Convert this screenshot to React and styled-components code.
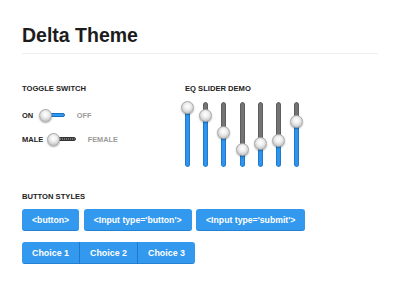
import React from 'react';
import styled, { createGlobalStyle } from 'styled-components';

const GlobalStyle = createGlobalStyle`
  body {
    margin: 0;
    background: #fff;
    font-family: "Liberation Sans", Arial, sans-serif;
  }
`;

const sliders = [5, 13, 30, 47, 41, 38, 19];

const Page = styled.div`
  padding: 22px 22px 0;
`;

const Title = styled.h1`
  margin: 0;
  padding: 1px 0 6px;
  font-size: 19.5px;
  line-height: 24px;
  font-weight: bold;
  color: #1c1c1c;
  border-bottom: 1px solid #eee;
`;

const Columns = styled.div`
  display: flex;
  margin-top: 30px;
`;

const Column = styled.div`
  display: flex;
  flex-direction: column;
  width: ${p => p.$width || 'auto'};
`;

const Label = styled.div`
  font-size: 7.6px;
  line-height: 10px;
  font-weight: bold;
  color: #222;
`;

const ToggleRow = styled.div`
  display: flex;
  align-items: center;
  height: 14px;
  margin-top: ${p => p.$top}px;
  font-size: 7.5px;
  font-weight: bold;
`;

const RowLabel = styled.span`
  color: #222;
`;

const OffLabel = styled.span`
  color: #9a9a9a;
  margin-left: 12px;
  font-size: 7.3px;
`;

const Toggle = styled.span`
  position: relative;
  display: inline-block;
  height: 13px;
  width: ${p => p.$width}px;
  margin-left: ${p => p.$gap}px;
`;

const ToggleTrack = styled.span`
  position: absolute;
  left: 6px;
  right: 0;
  top: 4.5px;
  height: 4px;
  box-sizing: border-box;
  border-radius: 2px;
  border: 1px solid ${p => (p.$on ? '#1b6fc2' : '#333')};
  background: ${p =>
    p.$on
      ? '#2f98ef'
      : 'repeating-linear-gradient(90deg, #777 0 1px, #3a3a3a 1px 2px)'};
`;

const Knob = styled.span`
  position: absolute;
  left: 0;
  width: 13px;
  height: 13px;
  box-sizing: border-box;
  border-radius: 50%;
  border: 1px solid #a9a9a9;
  background: radial-gradient(circle at 50% 40%, #ffffff 0%, #f0f0f0 35%, #cfcfcf 70%, #a8a8a8 100%);
  box-shadow: 0 1px 1.5px rgba(0, 0, 0, 0.35);
`;

const ToggleKnob = styled(Knob)`
  top: 0;
`;

const SliderRow = styled.div`
  display: flex;
  gap: 5.2px;
  margin-top: 8px;
  margin-left: -4px;
`;

const Slider = styled.div`
  position: relative;
  width: 13px;
  height: 65px;
  display: flex;
  justify-content: center;
`;

const Track = styled.div`
  width: 5px;
  height: 100%;
  display: flex;
  flex-direction: column;
  border-radius: 2.5px;
  overflow: hidden;
`;

const TrackEmpty = styled.div`
  flex: 1;
  background: #747474;
  border: 1px solid #5e5e5e;
  border-bottom: none;
  border-radius: 2.5px 2.5px 0 0;
`;

const TrackFill = styled.div`
  background: #2f95ec;
  border: 1px solid #1f79cc;
  border-top: none;
  border-radius: 0 0 2.5px 2.5px;
`;

const SliderKnob = styled(Knob)`
  top: 0;
`;

const Section = styled.div`
  margin-top: 25px;
`;

const ButtonRow = styled.div`
  display: flex;
  gap: 4.5px;
  margin-top: ${p => p.$top}px;
`;

const Button = styled.button`
  height: 22px;
  padding: 0 10px;
  border: none;
  border-radius: 3px;
  background: #3399ee;
  box-shadow: inset 0 -1px 0 rgba(0, 60, 130, 0.25);
  color: #fff;
  font-family: "Liberation Sans", Arial, sans-serif;
  font-size: 8.7px;
  font-weight: bold;
`;

const Group = styled.div`
  display: inline-flex;
  margin-top: 11px;
  border-radius: 3px;
  overflow: hidden;
  box-shadow: inset 0 -1px 0 rgba(0, 60, 130, 0.25);
`;

const Choice = styled(Button)`
  border-radius: 0;
  width: ${p => p.$width}px;
  padding: 0;
  font-size: 8.9px;
  border-left: ${p => (p.$first ? 'none' : '1px solid #2178c8')};
`;

function Switch({ on, width, gap }) {
  return (
    <Toggle $width={width} $gap={gap}>
      <ToggleTrack $on={on} />
      <ToggleKnob />
    </Toggle>
  );
}

export default function App() {
  return (
    <Page>
      <GlobalStyle />
      <Title>Delta Theme</Title>
      <Columns>
        <Column $width="163px">
          <Label>TOGGLE SWITCH</Label>
          <ToggleRow $top={14}>
            <RowLabel>ON</RowLabel>
            <Switch on width={26} gap={5.5} />
            <OffLabel>OFF</OffLabel>
          </ToggleRow>
          <ToggleRow $top={10}>
            <RowLabel>MALE</RowLabel>
            <Switch width={29} gap={3.5} />
            <OffLabel>FEMALE</OffLabel>
          </ToggleRow>
        </Column>
        <Column>
          <Label>EQ SLIDER DEMO</Label>
          <SliderRow>
            {sliders.map((v, i) => (
              <Slider key={i}>
                <Track>
                  <TrackEmpty />
                  <TrackFill style={{ height: 65 - v }} />
                </Track>
                <SliderKnob style={{ top: v - 6.5 }} />
              </Slider>
            ))}
          </SliderRow>
        </Column>
      </Columns>
      <Section>
        <Label>BUTTON STYLES</Label>
        <ButtonRow $top={7}>
          <Button>&lt;button&gt;</Button>
          <Button>&lt;Input type='button'&gt;</Button>
          <Button>&lt;Input type='submit'&gt;</Button>
        </ButtonRow>
        <Group>
          <Choice $first $width={57}>Choice 1</Choice>
          <Choice $width={58}>Choice 2</Choice>
          <Choice $width={58}>Choice 3</Choice>
        </Group>
      </Section>
    </Page>
  );
}
